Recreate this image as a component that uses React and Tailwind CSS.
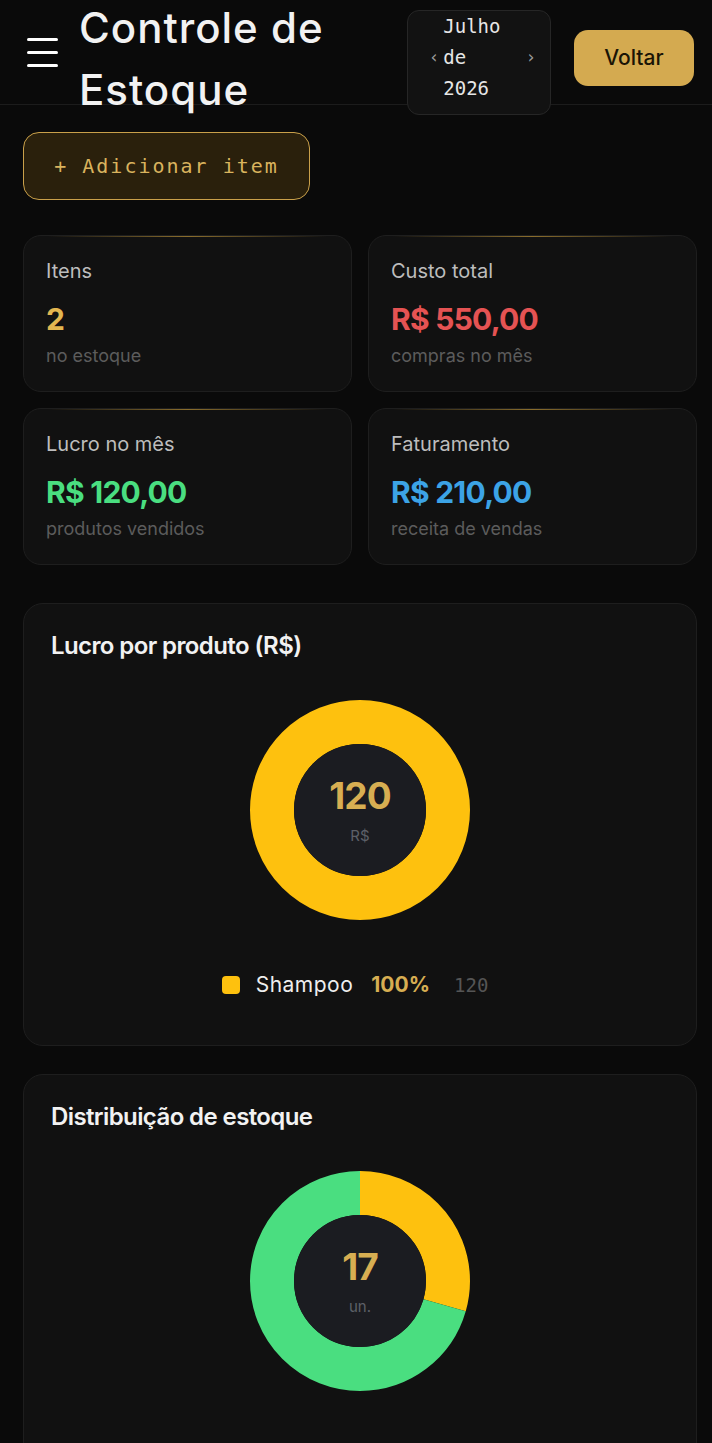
import React from "react";

const sans = { fontFamily: "Inter, 'Noto Sans', sans-serif" };
const mono = { fontFamily: "'DejaVu Sans Mono', 'Liberation Mono', monospace" };

const stats = [
  { label: "Itens", value: "2", sub: "no estoque", color: "text-[#e2b650]" },
  { label: "Custo total", value: "R$ 550,00", sub: "compras no mês", color: "text-[#e55353]" },
  { label: "Lucro no mês", value: "R$ 120,00", sub: "produtos vendidos", color: "text-[#4ade80]" },
  { label: "Faturamento", value: "R$ 210,00", sub: "receita de vendas", color: "text-[#3ca3e6]" },
];

// donut: segments as [value, color]
const Donut = ({ segments, total, unit }) => {
  const r = 88;
  const c = 2 * Math.PI * r;
  let offset = 0;
  return (
    <div className="relative w-[220px] h-[220px]">
      <svg width="220" height="220" viewBox="0 0 220 220" className="-rotate-90">
        {segments.map(([v, col], i) => {
          const len = (v / total) * c;
          const el = (
            <circle
              key={i}
              cx="110"
              cy="110"
              r={r}
              fill="none"
              stroke={col}
              strokeWidth="44"
              strokeDasharray={`${len} ${c - len}`}
              strokeDashoffset={-offset}
            />
          );
          offset += len;
          return el;
        })}
        <circle cx="110" cy="110" r="66" fill="#1b1c21" />
      </svg>
      <div className="absolute inset-0 flex flex-col items-center justify-center">
        <span className="text-[37px] font-bold text-[#d7ae52] leading-none tracking-tight">{total}</span>
        <span className="text-[15px] text-[#5d6068] mt-[14px] leading-none">{unit}</span>
      </div>
    </div>
  );
};

export default function App() {
  return (
    <div className="min-h-screen bg-[#0a0a0a] text-white overflow-hidden" style={sans}>
      {/* Header */}
      <header className="h-[105px] flex items-center pl-[27px] pr-[18px] border-b border-[#1c1c1c] bg-[#0a0a0a]">
        <div className="flex flex-col gap-[10px] w-[31px]">
          <span className="block h-[3px] bg-white rounded-full" />
          <span className="block h-[3px] bg-white rounded-full" />
          <span className="block h-[3px] bg-white rounded-full" />
        </div>
        <h1 className="ml-[21px] mt-[14px] text-[42px] leading-[62px] font-medium tracking-[1px] text-[#f2f2f2] w-[300px]">
          Controle de<br />Estoque
        </h1>
        <div className="ml-auto self-start mt-[10px] w-[144px] h-[105px] rounded-xl border border-[#262626] bg-[#121212] flex items-center pl-[21px] pr-[14px] text-[#e6e6e6]" style={mono}>
          <span className="text-[17px] text-[#9a9a9a] -mt-[10px]">‹</span>
          <div className="ml-[4px] text-[19px] leading-[31px] -mt-[10px]">Julho<br />de<br />2026</div>
          <span className="ml-auto text-[17px] text-[#9a9a9a] -mt-[10px]">›</span>
        </div>
        <button className="ml-[23px] mt-[12px] w-[120px] h-[56px] rounded-[14px] bg-[#d4aa50] text-[#1a1405] text-[21px] font-medium">
          Voltar
        </button>
      </header>

      <main className="pl-[23px] pr-[15px]">
        <button
          className="mt-[27px] w-[287px] h-[68px] rounded-2xl border border-[#c9a04a] bg-[#2a200c] text-[#d9b35e] text-[20px] tracking-[2px]"
          style={mono}
        >
          + Adicionar item
        </button>

        <div className="mt-[35px] grid grid-cols-2 gap-4">
          {stats.map((s) => (
            <div key={s.label} className="relative h-[157px] rounded-[18px] bg-[#111111] border border-[#1e1e1e] px-[22px] pt-[22px]">
              <div className="absolute top-0 left-[24px] right-[24px] h-px bg-gradient-to-r from-transparent via-[#8a6d2c] to-transparent" />
              <div className="text-[20px] text-[#bdbdbd] leading-[26px]">{s.label}</div>
              <div className={`mt-[17px] text-[30px] font-bold leading-[36px] tracking-tight ${s.color}`}>{s.value}</div>
              <div className="mt-[8px] text-[18px] text-[#5c5c5c] leading-[22px]">{s.sub}</div>
            </div>
          ))}
        </div>

        <section className="mt-[38px] h-[443px] rounded-[20px] bg-[#111111] border border-[#1e1e1e] px-[27px] pt-[28px]">
          <h2 className="text-[24px] font-semibold tracking-tight leading-[28px] text-[#f2f2f2]">Lucro por produto (R$)</h2>
          <div className="mt-[40px] flex justify-center">
            <Donut segments={[[120, "#fec10e"]]} total={120} unit="R$" />
          </div>
          <div className="mt-[49px] flex items-center justify-center gap-[16px] pr-[10px]">
            <span className="w-[18px] h-[18px] rounded-[4px] bg-[#fec10e]" />
            <span className="text-[21px] text-[#eeeeee] tracking-[0.5px]">Shampoo</span>
            <span className="ml-[2px] text-[21px] font-bold text-[#d7ae52]">100%</span>
            <span className="ml-[8px] text-[19px] text-[#555]" style={mono}>120</span>
          </div>
        </section>

        <section className="mt-[28px] h-[420px] rounded-[20px] bg-[#111111] border border-[#1e1e1e] px-[27px] pt-[28px]">
          <h2 className="text-[24px] font-semibold tracking-tight leading-[28px] text-[#f2f2f2]">Distribuição de estoque</h2>
          <div className="mt-[40px] flex justify-center">
            <Donut segments={[[5, "#fec10e"], [12, "#4ade80"]]} total={17} unit="un." />
          </div>
        </section>
      </main>
    </div>
  );
}
